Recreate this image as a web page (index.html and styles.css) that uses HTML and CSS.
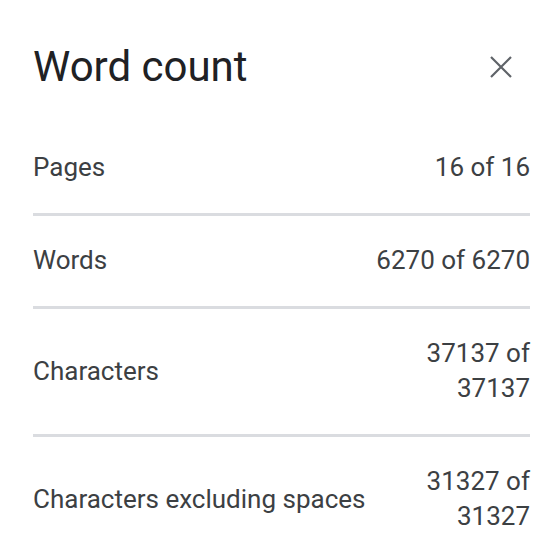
FILE: index.html
```html
<!DOCTYPE html>
<html lang="en">
<head>
    <meta charset="UTF-8">
    <meta name="viewport" content="width=device-width, initial-scale=1.0">
    <title>Word count</title>
    <link rel="stylesheet" href="styles.css">
</head>
<body>
    <div class="dialog">
        <div class="header">
            <h1>Word count</h1>
            <button class="close" type="button" aria-label="Close">
                <svg width="22" height="22" viewBox="0 0 22 22">
                    <path d="M1 1 L21 21 M21 1 L1 21" stroke="#5f6368" stroke-width="2.2" fill="none"/>
                </svg>
            </button>
        </div>

        <div class="row">
            <span class="label">Pages</span>
            <span class="value">16 of 16</span>
        </div>
        <div class="row">
            <span class="label">Words</span>
            <span class="value">6270 of 6270</span>
        </div>
        <div class="row">
            <span class="label">Characters</span>
            <span class="value">37137 of 37137</span>
        </div>
        <div class="row last">
            <span class="label">Characters excluding spaces</span>
            <span class="value">31327 of 31327</span>
        </div>
    </div>
</body>
</html>
```

FILE: styles.css
```css
body {
    margin: 0;
    background: #fff;
    font-family: Roboto, Arial, sans-serif;
    color: #3c4043;
}
.dialog {
    padding: 0 30px 0 33px;
}
.header {
    height: 123px;
    display: flex;
    align-items: center;
    justify-content: space-between;
    padding-top: 10px;
    box-sizing: border-box;
}
h1 {
    margin: 0;
    font-size: 42px;
    font-weight: 400;
    color: #202124;
}
.close {
    background: none;
    border: none;
    padding: 0;
    margin-right: 18px;
    display: flex;
    cursor: pointer;
}
.row {
    display: flex;
    align-items: center;
    justify-content: space-between;
    gap: 20px;
    padding: 27px 0 28px;
    border-bottom: 3px solid #dadce0;
    font-size: 26px;
    line-height: 35px;
}
.row.last {
    border-bottom: none;
}
.label {
    white-space: nowrap;
}
.value {
    max-width: 170px;
    text-align: right;
}
```
